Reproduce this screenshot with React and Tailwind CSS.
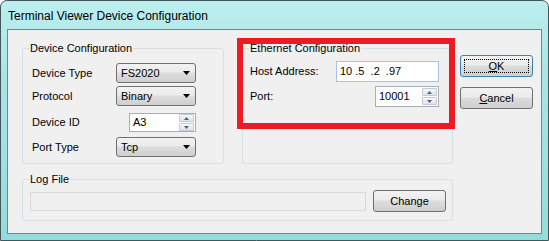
import React from 'react';

const btnBg = 'bg-[linear-gradient(#f2f2f2,#ebebeb_45%,#dddddd_50%,#cfcfcf)]';

const Arrow = ({ up, color = '#000' }) => (
    <svg width="7" height="4" viewBox="0 0 7 4">
        <path d={up ? 'M3.5 0L7 4H0z' : 'M0 0h7L3.5 4z'} fill={color} />
    </svg>
);

const Combo = ({ value }) => (
    <div className={`w-[80px] h-[20px] border border-[#707070] rounded-[3px] ${btnBg} flex items-center pl-[4px] pr-[5px]`}>
        <span className="flex-1">{value}</span>
        <Arrow />
    </div>
);

// small up/down pair on the right of a numeric box
const SpinButtons = () => (
    <div className="flex flex-col gap-px mr-[1px]">
        {[true, false].map(up => (
            <div
                key={up ? 'u' : 'd'}
                className="w-[15px] h-[8px] border border-[#c3cad3] rounded-[1px] bg-linear-to-b from-[#f7f8fa] to-[#dfe3e8] flex items-center justify-center"
            >
                <svg width="5" height="3" viewBox="0 0 5 3">
                    <path d={up ? 'M2.5 0L5 3H0z' : 'M0 0h5L2.5 3z'} fill="#4c5f86" />
                </svg>
            </div>
        ))}
    </div>
);

const Spin = ({ value, className }) => (
    <div className={`${className} border border-[#abadb3] bg-white flex items-center pl-[3px]`}>
        <span className="flex-1">{value}</span>
        <SpinButtons />
    </div>
);

const Group = ({ title, className, children }) => (
    <div className={`relative border border-[#d5dfe5] rounded-[3px] ${className}`}>
        <span className="absolute -top-[7px] left-[6px] bg-[#f0f0f0] px-[1px] leading-[13px]">{title}</span>
        {children}
    </div>
);

const Button = ({ children, focused }) => (
    <div
        className={`relative w-[73px] h-[22px] rounded-[3px] border ${focused ? 'border-[#3c7fb1]' : 'border-[#707070]'} ${btnBg} flex items-center justify-center`}
    >
        {focused && <span className="absolute inset-[3px] border border-dotted border-black" />}
        {children}
    </div>
);

const Row = ({ label, children, className }) => (
    <div className={`flex items-center ${className}`}>
        <span className="w-[84px]">{label}</span>
        <div className="w-[80px] flex justify-end">{children}</div>
    </div>
);

export default function App() {
    return (
        <div className="w-[549px] h-[241px] bg-white">
            <div className="w-[549px] h-[241px] border border-[#43565c] rounded-t-[7px] bg-[linear-gradient(#bdeeee,#a9e6e6_30%,#93dcdc)] px-[6px] pb-[6px] flex flex-col">
                {/* title bar */}
                <div className="h-[28px] flex items-center pl-[1px] pt-[1px] text-[12px] text-black font-['Liberation_Sans',sans-serif]">
                    Terminal Viewer Device Configuration
                </div>

                {/* client area */}
                <div className="flex-1 border border-[#6f8890] bg-[#f0f0f0] text-[11px] text-black font-['Liberation_Sans',sans-serif] pl-[14px] pt-[18px]">
                    <div className="flex items-start">
                        <Group title="Device Configuration" className="w-[202px] h-[116px] pl-[9px] pt-[14px]">
                            <Row label="Device Type">
                                <Combo value="FS2020" />
                            </Row>
                            <Row label="Protocol" className="mt-[3px]">
                                <Combo value="Binary" />
                            </Row>
                            <Row label="Device ID" className="mt-[7px]">
                                <Spin value="A3" className="w-[67px] h-[19px]" />
                            </Row>
                            <Row label="Port Type" className="mt-[5px]">
                                <Combo value="Tcp" />
                            </Row>
                        </Group>

                        <Group title="Ethernet Configuration" className="ml-[18px] w-[211px] h-[116px] pl-[7px] pr-[13px] pt-[12px]">
                            <div className="flex items-center justify-between">
                                <span>Host Address:</span>
                                <div className="w-[103px] h-[21px] border border-[#a6c3e2] bg-white flex items-center pl-[3px] whitespace-pre">
                                    10 .5  .2  .97
                                </div>
                            </div>
                            <div className="flex items-center justify-between mt-[4px]">
                                <span>Port:</span>
                                <Spin value="10001" className="w-[64px] h-[21px]" />
                            </div>
                        </Group>

                        <div className="ml-[7px] mt-[7px] flex flex-col gap-[10px]">
                            <Button focused>
                                <span><u>O</u>K</span>
                            </Button>
                            <Button>
                                <span><u>C</u>ancel</span>
                            </Button>
                        </div>
                    </div>

                    <Group title="Log File" className="mt-[15px] w-[431px] h-[42px] pl-[7px] pt-[10px]">
                        <div className="flex items-center">
                            <div className="w-[336px] h-[19px] border border-[#d9d9d9] bg-[#f0f0f0]" />
                            <div className="ml-[7px]">
                                <Button>Change</Button>
                            </div>
                        </div>
                    </Group>
                </div>
            </div>
            {/* red annotation box over the ethernet group */}
            <div className="fixed left-[237px] top-[38px] w-[218px] h-[91px] border-[6px] border-[#ed1c24] pointer-events-none" />
        </div>
    );
}
